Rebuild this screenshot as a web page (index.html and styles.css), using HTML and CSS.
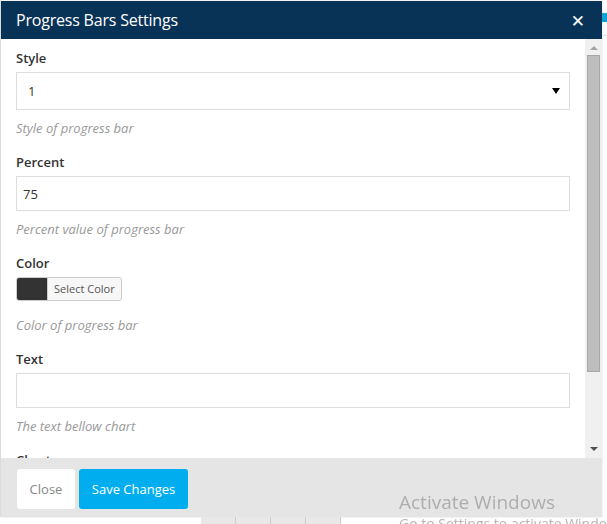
FILE: index.html
```html
<!DOCTYPE html>
<html>
<head>
<meta charset="utf-8">
<link rel="stylesheet" href="styles.css">
</head>
<body>
<div class="page">
  <div class="modal">
    <div class="modal-header">
      <span class="modal-title">Progress Bars Settings</span>
      <span class="modal-close">&#x2715;</span>
    </div>
    <div class="modal-body">
      <div class="modal-content">
        <div class="group">
          <div class="label">Style</div>
          <div class="field select"><span>1</span><span class="caret"></span></div>
          <div class="help">Style of progress bar</div>
        </div>
        <div class="group">
          <div class="label">Percent</div>
          <div class="field input">75</div>
          <div class="help">Percent value of progress bar</div>
        </div>
        <div class="group">
          <div class="label">Color</div>
          <div class="colorpick"><span class="swatch"></span><span class="pick-btn">Select Color</span></div>
          <div class="help help-color">Color of progress bar</div>
        </div>
        <div class="group">
          <div class="label">Text</div>
          <div class="field input"></div>
          <div class="help">The text bellow chart</div>
        </div>
        <div class="group">
          <div class="label">Chart</div>
        </div>
      </div>
      <div class="scrollbar">
        <span class="arrow up"></span>
        <span class="thumb"></span>
        <span class="track-rest"></span>
        <span class="arrow down"></span>
      </div>
    </div>
    <div class="modal-footer">
      <span class="btn btn-close">Close</span>
      <span class="btn btn-save">Save Changes</span>
    </div>
  </div>
  <div class="edge">
    <span class="edge-blue"></span>
    <span class="edge-line"></span>
  </div>
</div>
<div class="toolbar">
  <span class="tool"></span><span class="tool"></span><span class="tool"></span><span class="tool"></span>
</div>
<div class="watermark">
  <div class="wm-1">Activate Windows</div>
  <div class="wm-2">Go to Settings to activate Windows.</div>
</div>
</body>
</html>
```

FILE: styles.css
```css
html, body {
  margin: 0;
  padding: 0;
  background: #ffffff;
  font-family: "Open Sans", "Liberation Sans", sans-serif;
  overflow: hidden;
}
.page {
  display: flex;
  align-items: flex-start;
  height: 517px;
  border-left: 1px solid #e6e6e6;
}
.modal {
  margin-top: 1px;
  width: 601px;
  height: 516px;
  display: flex;
  flex-direction: column;
  background: #fff;
  box-shadow: 0 0 2px rgba(0,0,0,0.15);
}
.modal-header {
  height: 38px;
  flex: none;
  background: #093257;
  color: #fff;
  display: flex;
  align-items: center;
  justify-content: space-between;
  padding: 0 17px 0 15px;
}
.modal-title {
  font-size: 16px;
  letter-spacing: -0.2px;
}
.modal-close {
  font-size: 17px;
  font-weight: 700;
  font-family: "DejaVu Sans", sans-serif;
  line-height: 1;
  margin-top: 2px;
}
.modal-body {
  flex: 1;
  display: flex;
  min-height: 0;
  overflow: hidden;
}
.modal-content {
  flex: 1;
  padding: 10px 15px 0 15px;
  overflow: hidden;
}
.group {
  margin-bottom: 16px;
}
.label {
  font-size: 13px;
  font-weight: 600;
  color: #333;
  line-height: 18px;
  margin-bottom: 5px;
}
.field {
  border: 1px solid #dddddd;
  box-sizing: border-box;
  font-size: 13px;
  color: #333;
  display: flex;
  align-items: center;
}
.select {
  height: 38px;
  padding: 0 11px 0 11px;
  justify-content: space-between;
}
.caret {
  width: 0;
  height: 0;
  border-left: 4px solid transparent;
  border-right: 4px solid transparent;
  border-top: 6px solid #000;
  margin-right: -2px;
}
.input {
  height: 35px;
  padding: 0 6px;
}
.help {
  font-size: 13px;
  font-style: italic;
  color: #999;
  line-height: 18px;
  margin-top: 9px;
}
.help-color {
  margin-top: 15px;
}
.colorpick {
  display: flex;
  width: 106px;
  height: 24px;
  border: 1px solid #cccccc;
  border-radius: 3px;
  box-sizing: border-box;
  overflow: hidden;
  background: #f7f7f7;
}
.swatch {
  width: 30px;
  background: #333333;
  border-right: 1px solid #cccccc;
}
.pick-btn {
  font-size: 11px;
  color: #555;
  padding: 0 0 0 6px;
  line-height: 22px;
}
.scrollbar {
  width: 17px;
  flex: none;
  background: #f0f0f0;
  display: flex;
  flex-direction: column;
  align-items: center;
}
.arrow {
  width: 0;
  height: 0;
  border-left: 4px solid transparent;
  border-right: 4px solid transparent;
}
.arrow.up {
  border-bottom: 4px solid #a3a3a3;
  margin: 7px 0 5px;
}
.thumb {
  width: 13px;
  height: 317px;
  box-sizing: border-box;
  background: #bdbdbd;
  border: 1px solid #a8a8a8;
}
.track-rest {
  flex: 1;
}
.arrow.down {
  border-top: 4px solid #505050;
  margin: 0 0 7px;
}
.modal-footer {
  flex: none;
  height: 59px;
  box-sizing: border-box;
  background: #e5e5e5;
  display: flex;
  align-items: flex-start;
  gap: 4px;
  padding: 11px 16px 0;
}
.btn {
  height: 40px;
  box-sizing: border-box;
  display: flex;
  align-items: center;
  justify-content: center;
  border-radius: 3px;
  font-size: 13px;
}
.btn-close {
  background: #fff;
  color: #888;
  width: 58px;
}
.btn-save {
  background: #00aeef;
  color: #fff;
  width: 109px;
}
.edge {
  width: 5px;
  height: 517px;
  display: flex;
  flex-direction: column;
}
.edge-blue {
  margin-top: 13px;
  height: 9px;
  background: #0ea2d8;
}
.edge-line {
  margin-top: 13px;
  height: 1px;
  background: #e3e3e3;
}
.toolbar {
  display: flex;
  margin-left: 201px;
  height: 7px;
}
.tool {
  width: 34px;
  height: 7px;
  background: #e8e8e8;
  border-right: 1px solid #cccccc;
}
.watermark {
  position: fixed;
  left: 399px;
  top: 490px;
  color: rgba(150,150,150,0.7);
  font-family: "Open Sans", sans-serif;
  pointer-events: none;
  white-space: nowrap;
}
.wm-1 {
  font-size: 19px;
  line-height: 25px;
}
.wm-2 {
  font-size: 14px;
  line-height: 17px;
}
```
